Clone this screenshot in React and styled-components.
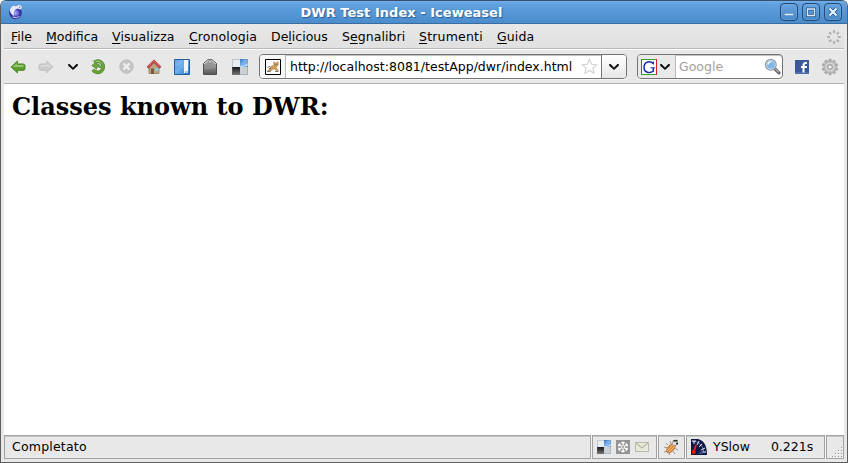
import React from 'react';
import styled, { createGlobalStyle } from 'styled-components';

const Global = createGlobalStyle`
  * { box-sizing: border-box; }
  html, body { margin: 0; padding: 0; overflow: hidden; background: #fff; }
  svg { display: block; flex: none; }
`;

const Window = styled.div`
  width: 848px;
  height: 463px;
  display: flex;
  flex-direction: column;
  border: 1px solid #5e5e5e;
  border-top-color: #35506d;
  border-radius: 6px 6px 0 0;
  background: #e8e8e8;
  overflow: hidden;
  font: 12.5px/16px "DejaVu Sans", sans-serif;
  color: #000;
`;

const TitleBar = styled.header`
  height: 23px;
  flex: none;
  display: flex;
  align-items: center;
  padding: 0 5px 0 7px;
  background: linear-gradient(#73aee8, #61a0df 15%, #4a8ccc);
  border-bottom: 1px solid #3b6c9f;
`;

const Title = styled.h1`
  flex: 1;
  margin: 0;
  padding: 2px 1px 0 0;
  text-align: center;
  font-size: 13px;
  line-height: 20px;
  font-weight: bold;
  letter-spacing: 0.03px;
  color: #fff;
  text-shadow: 1px 1px 1px #2c5e92;
`;

const WindowButtons = styled.div`
  display: flex;
  gap: 4px;
`;

const WindowButton = styled.button`
  width: 18px;
  height: 18px;
  padding: 0;
  border: 1px solid #234a75;
  border-radius: 4px;
  background: linear-gradient(#68a5e0, #4788c8);
  box-shadow: inset 0 0 0 1px #76aee366;
  display: flex;
  align-items: center;
  justify-content: center;
`;

const Frame = styled.div`
  flex: 1;
  min-height: 0;
  display: flex;
  flex-direction: column;
  padding: 0 3px 3px;
`;

const MenuBar = styled.nav`
  height: 25px;
  flex: none;
  display: flex;
  align-items: center;
  padding: 2px 0 0 7px;
  background: linear-gradient(#e8e8e8, #e0e0e0);
  border-bottom: 1px solid #b9b9b9;
`;

const MenuItem = styled.span`
  width: ${(p) => p.$width}px;
  flex: none;
  white-space: nowrap;
  letter-spacing: ${(p) => p.$spacing || 0}px;
  u { text-underline-offset: 2px; text-decoration-thickness: 1px; text-decoration-skip-ink: none; }
`;

const Throbber = styled.div`
  margin-left: auto;
  padding-right: 3px;
`;

const ToolBar = styled.div`
  height: 35px;
  flex: none;
  display: flex;
  align-items: center;
  border-top: 1px solid #fbfbfb;
  border-bottom: 1px solid #b4b4b4;
`;

const Tool = styled.span`
  width: ${(p) => p.$width}px;
  flex: none;
  display: flex;
  justify-content: center;
`;

const Field = styled.div`
  width: ${(p) => p.$width}px;
  height: 25px;
  flex: none;
  margin-left: ${(p) => p.$left}px;
  display: flex;
  align-items: stretch;
  border: 1px solid #747474;
  border-radius: 4px;
  background: #fff;
  box-shadow: inset 0 1px 0 #c4c4c4, 0 1px 0 #f6f6f6;
  overflow: hidden;
`;

const FieldLead = styled.div`
  width: ${(p) => p.$width}px;
  flex: none;
  display: flex;
  align-items: center;
  gap: ${(p) => p.$gap || 0}px;
  padding-left: ${(p) => p.$pad}px;
  border-right: 1px solid #b9b9b9;
  background: ${(p) => (p.$shaded ? '#e9e9e9' : '#f7f7f7')};
`;

const FieldText = styled.span`
  flex: 1;
  padding: 4px 0 0 ${(p) => (p.$muted ? 3 : 4)}px;
  white-space: nowrap;
  letter-spacing: ${(p) => p.$spacing || 0}px;
  color: ${(p) => (p.$muted ? '#a1a1a1' : '#000')};
`;

const FieldIcon = styled.span`
  flex: none;
  display: flex;
  align-items: center;
  padding-right: ${(p) => p.$pad}px;
`;

const DropButton = styled.span`
  width: 25px;
  flex: none;
  display: flex;
  align-items: center;
  justify-content: center;
  border-left: 1px solid #777;
  background: linear-gradient(#fff, #e6e6e6);
`;

const Page = styled.main`
  flex: 1;
  min-height: 0;
  padding: 9px 8px;
  background: #fff;
`;

const Heading = styled.h2`
  margin: 0;
  font: bold 24px/28px "DejaVu Serif", serif;
`;

const StatusBar = styled.footer`
  height: 24px;
  flex: none;
  display: flex;
  gap: 1px;
  background: #f5f5f5;
`;

const StatusPanel = styled.div`
  width: ${(p) => p.$width}px;
  flex: none;
  display: flex;
  align-items: center;
  gap: ${(p) => p.$gap || 0}px;
  padding-left: ${(p) => p.$pad}px;
  border: 1px solid #a2a2a2;
  box-shadow: inset 0 1px 0 #c5c5c5;
  background: #e8e8e8;
  white-space: nowrap;
  letter-spacing: ${(p) => p.$spacing || 0}px;
`;

const ResizeCorner = styled(StatusPanel)`
  align-items: flex-end;
`;

const StatusTime = styled.span`
  margin-left: 15px;
`;

const Chevron = () => (
  <svg width="12" height="8" viewBox="0 0 12 8"><path d="M1.2 1v1.7L6 7l4.8-4.3V1H9.4L6 4.5 2.6 1z" fill="#111" /></svg>
);

const Arrow = ({ forward }) => (
  <svg width="16" height="14" viewBox="0 0 16 14">
    <g transform={forward ? 'matrix(-1 0 0 1 16 0)' : undefined}>
      <path d="M1 7l6.5-6v2.9H13q2 0 2 1.5v3.3q0 1.7-2 1.7H7.5V13z" fill={forward ? '#cbcbcb' : '#5c9c2b'} stroke={forward ? '#bfbfbf' : '#457f24'} strokeWidth=".8" />
      <path d="M2.5 7l4.4-4v1.9H13.5v2z" fill={forward ? '#d9d9d9' : '#94c772'} />
    </g>
  </svg>
);

const Reload = () => (
  <svg width="16" height="16" viewBox="0 0 16 16">
    <path d="M4.2 3.4Q8 .9 11.2 3.4C14 6 13.8 10.3 11 12.4 8.6 14.2 4.9 13.6 3 10.7" fill="none" stroke="#457d24" strokeWidth="3.6" />
    <path d="M4.2 3.4Q8 .9 11.2 3.4C14 6 13.8 10.3 11 12.4 8.6 14.2 4.9 13.6 3 10.7" fill="none" stroke="#66a43a" strokeWidth="2.6" />
    <path d="M1.8 6.4L6.6 2.8v2.1q4.2.2 4.2 4.2Q9 7.6 6.6 8v2.2z" fill="#68a53c" stroke="#457d24" strokeWidth=".6" />
    <path d="M2 1.2l2 2.2M5.5 2.7q4-1.8 6 1.8" fill="none" stroke="#a4cf85" />
  </svg>
);

const Stop = () => (
  <svg width="15" height="15" viewBox="0 0 15 15">
    <circle cx="7.5" cy="7.5" r="6.7" fill="#c6c6c6" stroke="#bdbdbd" />
    <path d="M4.5 4.5l6 6m0-6l-6 6" stroke="#efefef" strokeWidth="2.3" />
  </svg>
);

const Home = () => (
  <svg width="16" height="16" viewBox="0 0 16 16">
    <path d="M3 8l5-5 5 5v6.5H3z" fill="#bda37c" stroke="#907b5b" strokeWidth=".8" />
    <path d="M5 9.5h3V15H5z" fill="#785b40" />
    <path d="M9.3 9h3v3h-3z" fill="#8dcbe2" />
    <path d="M1.5 8.7L8 2.4l6.5 6.3" fill="none" stroke="#b14448" strokeWidth="2.6" />
    <path d="M2 7.7L8 2l6 5.7" fill="none" stroke="#db6762" />
  </svg>
);

const Sidebar = () => (
  <svg width="16" height="16" viewBox="0 0 16 16">
    <defs><linearGradient id="blue" x2="1" y2="1"><stop stopColor="#3882d2" /><stop offset=".45" stopColor="#72b0ec" /><stop offset="1" stopColor="#2376ce" /></linearGradient></defs>
    <path d="M.5.5h15v15H.5z" fill="url(#blue)" stroke="#205e9e" />
    <path d="M10 1h4v11l-1 2h-3z" fill="#f0f7fd" />
    <path d="M1 8q5-1 8-5V1H1z" fill="#b6dbfb" opacity=".35" />
    <path d="M11 12h3v2h-3z" fill="#a9c6de" />
  </svg>
);

const Tag = () => (
  <svg width="16" height="16" viewBox="0 0 16 16">
    <defs><linearGradient id="tag" x2="0" y2="1"><stop stopColor="#aaa" /><stop offset=".4" stopColor="#929292" /><stop offset="1" stopColor="#555" /></linearGradient></defs>
    <path d="M1.5 15.5v-11L6 .7h4l4.5 3.8v11z" fill="url(#tag)" stroke="#505050" />
    <path d="M2 5l4.3-3.5h3.4L14 5" fill="none" stroke="#d8d8d8" />
    <circle cx="8" cy="3" r="1.4" fill="#eee" stroke="#666" strokeWidth=".7" />
    <path d="M2 8q6 1 12-2v3q-6 2-12 1z" fill="#aaa" opacity=".35" />
  </svg>
);

const Delicious = ({ size = 16 }) => (
  <svg width={size} height={size} viewBox="0 0 16 16">
    <defs>
      <linearGradient id="dblue" x2="1" y2="1"><stop stopColor="#2d77d2" /><stop offset=".5" stopColor="#80b6ee" /><stop offset="1" stopColor="#3987dc" /></linearGradient>
      <linearGradient id="dblack" x2="0" y2="1"><stop stopColor="#171717" /><stop offset="1" stopColor="#777" /></linearGradient>
    </defs>
    <path d="M0 0h8v8H0z" fill="#e8edf1" /><path d="M8 0h8v8H8z" fill="url(#dblue)" />
    <path d="M0 8h8v8H0z" fill="url(#dblack)" /><path d="M8 8h8v8H8z" fill="#ccd0d4" />
    <path d="M8 7q6 0 8-4v4l-8 1z" fill="#cfe5f9" />
    <path d="M.5.5h15v15H.5z" fill="none" stroke="#687785" opacity=".35" />
  </svg>
);

const Cat = () => (
  <svg width="16" height="16" viewBox="0 0 16 16">
    <path d="M.5.5h15v15H.5z" fill="#fff" stroke="#000" />
    <path d="M8.5 2.8l1.3 1 1.7-.1L13 2.5l.3 3-1 1.8-1.5.8 2.7 3.4-1 .6-3-2-2.2.5L5.8 12H2.5l2-2L6 7.3l3-1z" fill="#d39d4e" stroke="#765432" strokeWidth=".35" />
    <path d="M2.3 8.5L5 7.2M2 12.5h3.5M10 5v1m2-1v1M4 10l2-1.2M10 12.5h3.5" stroke="#555" strokeWidth=".8" />
  </svg>
);

const Star = () => (
  <svg width="17" height="17" viewBox="0 0 17 17">
    <path d="M8.5 1.3l2.1 5 5.2.4-4 3.4 1.3 5.3-4.6-2.9-4.6 2.9 1.3-5.3-4-3.4 5.2-.4z" fill="#fff" stroke="#d0d0d0" strokeWidth="1.1" strokeLinejoin="round" />
  </svg>
);

const Google = () => (
  <svg width="16" height="16" viewBox="0 0 16 16">
    <path d="M0 0h16v16H0z" fill="#fff" />
    <path d="M.5 0v16" stroke="#355dc0" /><path d="M0 .5h16M0 15.5h16" stroke="#35a328" /><path d="M15.5 0v16" stroke="#d52020" />
    <path d="M12.5 4.8Q10 2.3 7 3C1.8 4.2 1.6 12.5 7 13.4q3 .5 5.3-1.2V9" fill="none" stroke="#172c9f" strokeWidth="1.5" />
    <path d="M12.5 2.5v3M9.5 8.8h4.7" stroke="#172c9f" fill="none" />
  </svg>
);

const Magnifier = () => (
  <svg width="17" height="17" viewBox="0 0 17 17">
    <path d="M10.5 10.5l4.5 4.3" stroke="#5b6269" strokeWidth="3.2" strokeLinecap="round" />
    <path d="M11.3 10.9l3.6 3.5" stroke="#b4b8ba" strokeWidth="1.3" />
    <circle cx="6.8" cy="6.8" r="5.3" fill="#80b5e8" stroke="#989ca0" strokeWidth="1.5" />
    <circle cx="6.8" cy="6.8" r="4.3" fill="none" stroke="#c6dff4" />
    <path d="M4 6.5q.5-3 3.5-2.6" stroke="#eff8ff" strokeWidth="1.4" fill="none" />
  </svg>
);

const Facebook = () => (
  <svg width="14" height="14" viewBox="0 0 14 14">
    <path d="M0 0h14v14H0z" fill="#3b5998" /><path d="M0 13h14" stroke="#6580ba" />
    <path d="M8.5 12.5V5.5Q8.5 3 10.5 3H12M6 7h6" fill="none" stroke="#fff" strokeWidth="2" />
  </svg>
);

const Gear = () => (
  <svg width="18" height="18" viewBox="-9 -9 18 18">
    {Array.from({ length: 10 }, (_, i) => <path key={i} d="M-1.4-5h2.8L1-7.8h-2z" transform={`rotate(${i * 36})`} fill="#b4b4b4" stroke="#8e8e8e" strokeWidth=".6" />)}
    <circle r="5.6" fill="#c4c4c4" />
    <circle r="4" fill="none" stroke="#d8d8d8" />
    <circle r="2.3" fill="#e8e8e8" stroke="#858585" strokeWidth=".8" />
  </svg>
);

const Spinner = () => (
  <svg width="14" height="14" viewBox="-7 -7 14 14">
    {Array.from({ length: 8 }, (_, i) => <path key={i} d="M0-4v-2.8" transform={`rotate(${i * 45})`} stroke="#b0b0b0" strokeWidth="2.2" />)}
  </svg>
);

const Globe = () => (
  <svg width="16" height="16" viewBox="0 0 16 16">
    <defs><radialGradient id="globe"><stop stopColor="#b3b4f5" /><stop offset=".65" stopColor="#4642bd" /><stop offset="1" stopColor="#25227d" /></radialGradient></defs>
    <circle cx="7.5" cy="9" r="6.2" fill="url(#globe)" />
    <path d="M2.5 4.5q1-3 4-2.8L8 2.5Q10 0 13 1.5l1 2-1.5 2-3-1-2 1L5.8 8l.2 4-2.5-2q-2.5-3-1-5.5z" fill="#e9e8fc" />
    <path d="M4.5 13q4 2 7-.5" stroke="#c9c8ed" fill="none" /><circle cx="11.7" cy="3.1" r=".6" fill="#333" />
  </svg>
);

const Snow = () => (
  <svg width="14" height="14" viewBox="-7 -7 14 14">
    <path d="M-7-7H7V7H-7z" fill="#949494" />
    {[0, 60, 120].map((a) => <path key={a} d="M0-5.5V5.5M-1.6-4.8L0-3.5 1.6-4.8M-1.6 4.8L0 3.5 1.6 4.8" transform={`rotate(${a})`} fill="none" stroke="#fff" strokeWidth="1.2" />)}
    <circle r="1" fill="#949494" />
  </svg>
);

const Mail = () => (
  <svg width="14" height="10" viewBox="0 0 14 10"><path d="M.5.5h13v9H.5z" fill="#e9e9d9" stroke="#b8b8aa" /><path d="M1 1l6 5 6-5" fill="none" stroke="#b9b9aa" strokeWidth="1.2" /></svg>
);

const Bug = () => (
  <svg width="17" height="17" viewBox="0 0 17 17">
    <path d="M5 6L3 4M5 9L1 8M5 12l-4 1M7 13l-1 3M10 12l2 3M11 9l4 2M8 5L7 2" stroke="#9d8f80" strokeWidth=".9" />
    <ellipse cx="8" cy="9.2" rx="3" ry="5.7" transform="rotate(43 8 9.2)" fill="#df8738" stroke="#a95b20" strokeWidth=".6" />
    <path d="M4 12l6-6M6 13l6-6" stroke="#ffc887" strokeWidth=".9" />
    <circle cx="12" cy="4" r="2.8" fill="#e3e0db" stroke="#85796c" strokeWidth=".6" /><path d="M10.5 2l4-.5M13 4.5h2" stroke="#222" strokeWidth="1.5" />
  </svg>
);

const Gauge = () => (
  <svg width="16" height="16" viewBox="0 0 16 16">
    <path d="M0 0h7q9 2 9 16H0z" fill="#101943" />
    <path d="M1 2.5q10-1 12 11" fill="none" stroke="#8190bd" strokeWidth=".8" />
    <path d="M1 2h4M3 2v3M8 2L6 6M11 5L8 8M14 9l-4 2M15 13h-4" stroke="#fff" strokeWidth=".9" />
    <path d="M5 6L3 12" stroke="#f02020" strokeWidth="1.8" /><circle cx="2.8" cy="13" r="2" fill="#e31919" />
    <path d="M7 15l4-4 1 4z" fill="#354a8e" />
  </svg>
);

const Grip = () => (
  <svg width="12" height="12" viewBox="0 0 12 12">
    {[0, 1, 2, 3].flatMap((r) => Array.from({ length: r + 1 }, (_, c) => (
      <g key={`${r}-${c}`}><path d={`M${10 - c * 3} ${1 + r * 3}h1v1h-1z`} fill="#999" /><path d={`M${11 - c * 3} ${2 + r * 3}h1v1h-1z`} fill="#fff" /></g>
    )))}
  </svg>
);

const MENUS = [
  ['', 'F', 'ile', 35, 0], ['', 'M', 'odifica', 66, 0], ['', 'V', 'isualizza', 77, 0.1], ['', 'C', 'ronologia', 82, 0.1],
  ['De', 'l', 'icious', 71, 0], ['S', 'e', 'gnalibri', 77, 0.05], ['', 'S', 'trumenti', 78, 0.2], ['', 'G', 'uida', 50, 0.1],
];

export default function App() {
  return (
    <>
      <Global />
      <Window>
        <TitleBar>
          <Globe />
          <Title>DWR Test Index - Iceweasel</Title>
          <WindowButtons>
            <WindowButton aria-label="Minimize"><svg width="10" height="10"><path d="M.5 6.5h9v2h-9z" fill="#e3f0fc" stroke="#285a8c" strokeWidth=".3" /></svg></WindowButton>
            <WindowButton aria-label="Maximize"><svg width="10" height="10"><path d="M1.5 2h7v6.5h-7z" fill="none" stroke="#285a8c" strokeWidth="3" /><path d="M1.5 2h7v6.5h-7z" fill="none" stroke="#d5e7f8" strokeWidth="1.4" /></svg></WindowButton>
            <WindowButton aria-label="Close"><svg width="10" height="10"><path d="M1.5 1.5l7 7m0-7l-7 7" stroke="#234f7e" strokeWidth="3.5" /><path d="M1.5 1.5l7 7m0-7l-7 7" stroke="#e9f4ff" strokeWidth="2.2" /></svg></WindowButton>
          </WindowButtons>
        </TitleBar>
        <Frame>
          <MenuBar>
            {MENUS.map(([before, key, after, width, spacing]) => (
              <MenuItem key={key + after} $width={width} $spacing={spacing}>{before}<u>{key}</u>{after}</MenuItem>
            ))}
            <Throbber><Spinner /></Throbber>
          </MenuBar>
          <ToolBar>
            <Tool $width={28}><Arrow /></Tool>
            <Tool $width={28}><Arrow forward /></Tool>
            <Tool $width={26}><Chevron /></Tool>
            <Tool $width={24}><Reload /></Tool>
            <Tool $width={32}><Stop /></Tool>
            <Tool $width={24}><Home /></Tool>
            <Tool $width={32}><Sidebar /></Tool>
            <Tool $width={24}><Tag /></Tool>
            <Tool $width={36}><Delicious /></Tool>
            <Field $width={368} $left={1}>
              <FieldLead $width={26} $pad={5}><Cat /></FieldLead>
              <FieldText $spacing={0.02}>http://localhost:8081/testApp/dwr/index.html</FieldText>
              <FieldIcon $pad={3}><Star /></FieldIcon>
              <DropButton><Chevron /></DropButton>
            </Field>
            <Field $width={146} $left={10}>
              <FieldLead $width={38} $pad={3} $gap={2} $shaded><Google /><Chevron /></FieldLead>
              <FieldText $muted>Google</FieldText>
              <FieldIcon $pad={1}><Magnifier /></FieldIcon>
            </Field>
            <Tool $width={38}><Facebook /></Tool>
            <Tool $width={18}><Gear /></Tool>
          </ToolBar>
          <Page><Heading>Classes known to DWR:</Heading></Page>
          <StatusBar>
            <StatusPanel $width={587} $pad={7} $spacing={0.2}>Completato</StatusPanel>
            <StatusPanel $width={65} $pad={4} $gap={5}><Delicious size={14} /><Snow /><Mail /></StatusPanel>
            <StatusPanel $width={27} $pad={4}><Bug /></StatusPanel>
            <StatusPanel $width={139} $pad={4} $gap={6}><Gauge />YSlow<StatusTime>0.221s</StatusTime></StatusPanel>
            <ResizeCorner $width={18} $pad={4}><Grip /></ResizeCorner>
          </StatusBar>
        </Frame>
      </Window>
    </>
  );
}
